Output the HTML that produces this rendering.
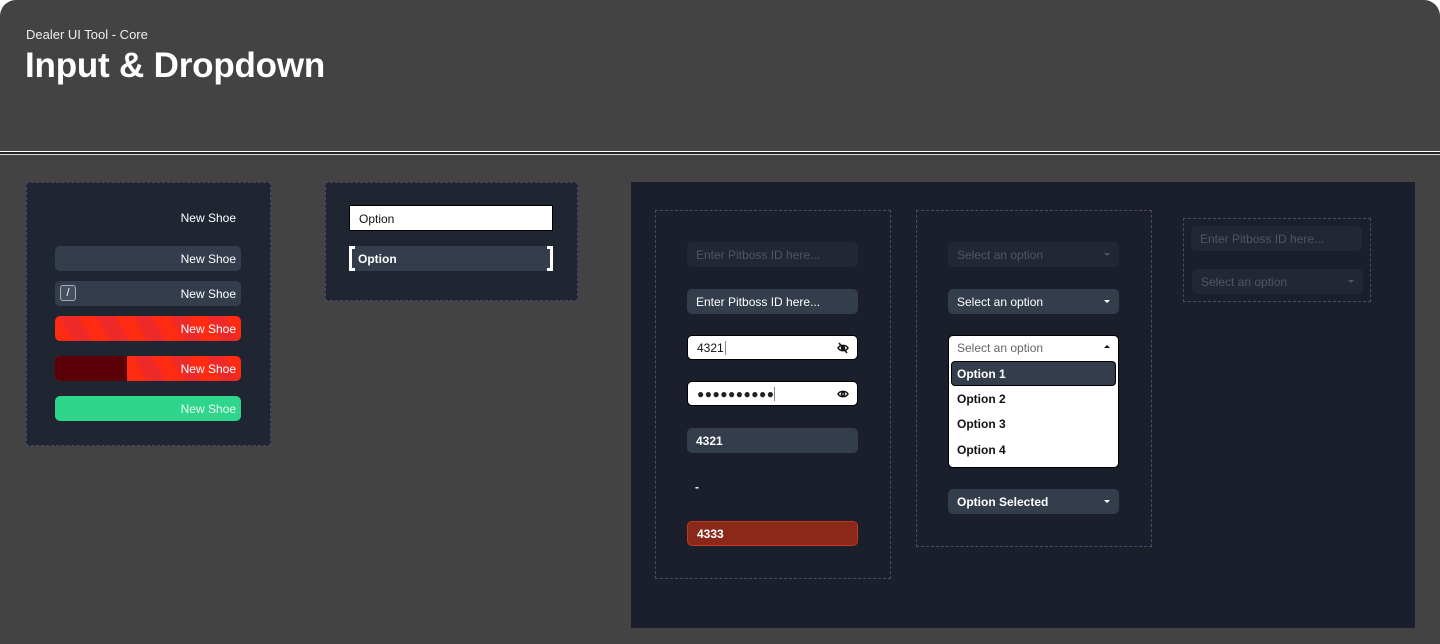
<!DOCTYPE html>
<html><head><style>
*{box-sizing:border-box;margin:0;padding:0}
body{width:1440px;height:644px;background:#fff;font-family:"Liberation Sans",sans-serif;overflow:hidden;position:relative}
.page{position:absolute;left:0;top:0;width:1440px;height:644px;background:#434343;border-radius:16px 16px 0 0;overflow:hidden}
.a{position:absolute}
.dash{position:absolute;border:1px dashed #4b4770}
.in{position:absolute;height:25px;border-radius:5px;font-size:12px;display:flex;align-items:center;padding-left:9px}
.bar{position:absolute;left:55px;width:186px;height:25px;border-radius:5px;font-size:12px;color:#fff;display:flex;align-items:center;justify-content:flex-end;padding-right:5px}
.caret{position:absolute;right:9px;top:11px;width:0;height:0;border-left:3.5px solid transparent;border-right:3.5px solid transparent;border-top:3.5px solid currentColor}
</style></head><body><div class="page">
<div class="a" style="left:26px;top:27px;color:#eee;font-size:13px">Dealer UI Tool - Core</div>
<div class="a" style="left:25px;top:46px;color:#fff;font-size:35px;font-weight:bold;letter-spacing:-0.2px">Input &amp; Dropdown</div>
<div class="a" style="left:0;top:151px;width:1440px;height:1px;background:#fff"></div>
<div class="a" style="left:0;top:152px;width:1440px;height:2px;background:#222"></div>
<div class="a" style="left:0;top:154px;width:1440px;height:1px;background:#ddd"></div>

<div class="dash" style="left:26px;top:182px;width:245px;height:264px;background:#202532"></div>
<div class="a" style="left:150px;top:211px;width:86px;text-align:right;color:#fff;font-size:12px">New Shoe</div>
<div class="bar" style="top:246px;background:#343d4b">New Shoe</div>
<div class="bar" style="top:281px;background:#343d4b">New Shoe<div class="a" style="left:5px;top:4px;width:16px;height:16px;border:1px solid #aab;border-radius:3px;background:#454f5e;color:#fff;font-size:11px;text-align:center;line-height:14px">/</div></div>
<div class="bar" style="top:316px;background:repeating-linear-gradient(60deg,#ff2a12 0 16px,#ee2a28 16px 32px)">New Shoe</div>
<div class="bar" style="top:356px;background:repeating-linear-gradient(60deg,#ff2a12 0 16px,#ee2a28 16px 32px)"><div class="a" style="left:0;top:0;width:72px;height:25px;background:#5a0006;border-radius:5px 0 0 5px"></div>New Shoe</div>
<div class="bar" style="top:396px;background:#2fd58a;color:#e8fff4">New Shoe</div>

<div class="dash" style="left:325px;top:182px;width:253px;height:119px;background:#202532"></div>
<div class="a" style="left:349px;top:205px;width:204px;height:26px;background:#fff;border:1px solid #000;font-size:12px;padding:6px 9px;color:#111">Option</div>
<div class="a" style="left:349px;top:246px;width:204px;height:25px;background:#343d4b"></div>
<div class="a" style="left:349px;top:246px;width:6px;height:25px;border:3px solid #fff;border-right:none"></div>
<div class="a" style="left:547px;top:246px;width:6px;height:25px;border:3px solid #fff;border-left:none"></div>
<div class="a" style="left:358px;top:252px;font-size:12px;font-weight:bold;color:#fff">Option</div>

<div class="a" style="left:631px;top:182px;width:784px;height:446px;background:#1b1f2b"></div>
<div class="dash" style="left:655px;top:210px;width:236px;height:369px"></div>
<div class="dash" style="left:916px;top:210px;width:236px;height:337px"></div>
<div class="dash" style="left:1183px;top:218px;width:188px;height:84px"></div>

<div class="in" style="left:687px;top:242px;width:171px;background:#222734;color:#4e5666">Enter Pitboss ID here...</div>
<div class="in" style="left:687px;top:289px;width:171px;background:#343d4b;color:#fff">Enter Pitboss ID here...</div>
<div class="in" style="left:687px;top:335px;width:171px;background:#fff;color:#111;border:1px solid #000">4321<span style="width:1px;height:14px;background:#888;margin-left:1px"></span>
<svg class="a" style="right:8px;top:6px" width="12" height="12" viewBox="0 0 12 12" fill="none" stroke="#111" stroke-width="1.5"><path d="M1 6c2-3.5 8-3.5 10 0c-2 3.5-8 3.5-10 0z"/><circle cx="6" cy="6" r="1.5"/><path d="M2 1l8 10"/></svg></div>
<div class="in" style="left:687px;top:381px;width:171px;background:#fff;color:#222;border:1px solid #000;letter-spacing:0.5px;font-size:12px">●●●●●●●●●●<span style="width:1px;height:14px;background:#888"></span>
<svg class="a" style="right:8px;top:6px" width="12" height="12" viewBox="0 0 12 12" fill="none" stroke="#111" stroke-width="1.5"><path d="M1 6c2-3.5 8-3.5 10 0c-2 3.5-8 3.5-10 0z"/><circle cx="6" cy="6" r="1.5"/></svg></div>
<div class="in" style="left:687px;top:428px;width:171px;background:#343d4b;color:#fff;font-weight:bold">4321</div>
<div class="a" style="left:695px;top:480px;color:#fff;font-size:12px;font-weight:bold">-</div>
<div class="in" style="left:687px;top:521px;width:171px;background:#8a2819;border:1px solid #c0391f;color:#fff;font-weight:bold">4333</div>

<div class="in" style="left:948px;top:242px;width:171px;background:#222734;color:#4e5666">Select an option<span class="caret"></span></div>
<div class="in" style="left:948px;top:289px;width:171px;background:#343d4b;color:#fff">Select an option<span class="caret"></span></div>
<div class="a" style="left:948px;top:335px;width:171px;height:133px;background:#fff;border-radius:5px;border:1px solid #000"></div>
<div class="a" style="left:957px;top:341px;font-size:12px;color:#666">Select an option</div>
<div class="a" style="left:1104px;top:345px;width:0;height:0;border-left:3.5px solid transparent;border-right:3.5px solid transparent;border-bottom:3.5px solid #111"></div>
<div class="a" style="left:951px;top:361px;width:165px;height:25px;background:#343d4b;border:1px solid #000;border-radius:4px"></div>
<div class="a" style="left:957px;top:367px;font-size:12px;color:#fff;font-weight:bold">Option 1</div>
<div class="a" style="left:957px;top:392px;font-size:12px;color:#111;font-weight:bold">Option 2</div>
<div class="a" style="left:957px;top:417px;font-size:12px;color:#111;font-weight:bold">Option 3</div>
<div class="a" style="left:957px;top:443px;font-size:12px;color:#111;font-weight:bold">Option 4</div>
<div class="in" style="left:948px;top:489px;width:171px;background:#343d4b;color:#fff;font-weight:bold">Option Selected<span class="caret"></span></div>

<div class="in" style="left:1191px;top:226px;width:171px;background:#222734;color:#4e5666">Enter Pitboss ID here...</div>
<div class="in" style="left:1192px;top:269px;width:171px;background:#222734;color:#4e5666">Select an option<span class="caret"></span></div>
</div></body></html>
